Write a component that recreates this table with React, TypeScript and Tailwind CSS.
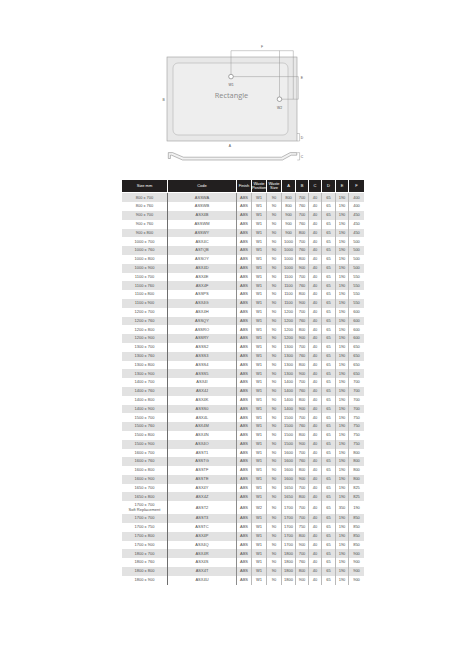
import React from "react";

type Row = {
  size: string;
  sub?: string;
  code: string;
  pos: string;
  a: string;
  b: string;
  e: string;
  f: string;
};

const F: Record<string, string> = {
  "800": "400",
  "900": "450",
  "1000": "500",
  "1100": "550",
  "1200": "600",
  "1300": "650",
  "1400": "700",
  "1500": "750",
  "1600": "800",
  "1650": "825",
  "1700": "850",
  "1800": "900",
};

const list: [string, string, string][] = [
  ["800", "700", "ASSWA"],
  ["800", "760", "ASSWB"],
  ["900", "700", "ASX4B"],
  ["900", "760", "ASSWM"],
  ["900", "800", "ASSWY"],
  ["1000", "700", "ASX4C"],
  ["1000", "760", "ASTQB"],
  ["1000", "800", "ASSOY"],
  ["1000", "900", "ASX4D"],
  ["1100", "700", "ASX4E"],
  ["1100", "760", "ASX4F"],
  ["1100", "800", "ASSPS"],
  ["1100", "900", "ASX4G"],
  ["1200", "700", "ASX4H"],
  ["1200", "760", "ASSQY"],
  ["1200", "800", "ASSRO"],
  ["1200", "900", "ASSRY"],
  ["1300", "700", "ASSS2"],
  ["1300", "760", "ASSS3"],
  ["1300", "800", "ASSS4"],
  ["1300", "900", "ASSS5"],
  ["1400", "700", "ASX4I"],
  ["1400", "760", "ASX4J"],
  ["1400", "800", "ASX4K"],
  ["1400", "900", "ASSS0"],
  ["1500", "700", "ASX4L"],
  ["1500", "760", "ASX4M"],
  ["1500", "800", "ASX4N"],
  ["1500", "900", "ASX4O"],
  ["1600", "700", "ASST1"],
  ["1600", "760", "ASSTG"],
  ["1600", "800", "ASSTF"],
  ["1600", "900", "ASSTE"],
  ["1650", "700", "ASX4Y"],
  ["1650", "800", "ASX4Z"],
  ["1700", "700", "ASST2"],
  ["1700", "700", "ASST3"],
  ["1700", "750", "ASSTC"],
  ["1700", "800", "ASX4P"],
  ["1700", "900", "ASX4Q"],
  ["1800", "700", "ASX4R"],
  ["1800", "760", "ASX4S"],
  ["1800", "800", "ASX4T"],
  ["1800", "900", "ASX4U"],
];

const rows: Row[] = list.map(([a, b, code], i) =>
  i === 35
    ? { size: `${a} x ${b}`, sub: "Soft Replacement", code, pos: "W2", a, b, e: "350", f: "190" }
    : { size: `${a} x ${b}`, code, pos: "W1", a, b, e: "190", f: F[a] }
);

const cols = "grid grid-cols-[45px_69px_15px_15px_15px_14px_13px_13px_14px_13px_16px]";

function Diagram() {
  const s = "#8f8f8f";
  return (
    <svg width="160" height="125" viewBox="150 40 160 125" className="block ml-[150px] mt-[40px]">
      {/* tray top view */}
      <rect x="167" y="57" width="130" height="84" fill="#e8e8e8" stroke="#9c9c9c" strokeWidth="0.6" />
      <rect x="173" y="63" width="115" height="72" rx="5" fill="#eeeeee" stroke="#b4b4b4" strokeWidth="0.6" />
      {/* waste positions */}
      <circle cx="231" cy="76.6" r="2.3" fill="#fff" stroke="#555" strokeWidth="0.5" />
      <circle cx="279.5" cy="99.2" r="2.3" fill="#fff" stroke="#555" strokeWidth="0.5" />
      {/* dimension lines */}
      <path
        d="M231 74.3 V50.7 H293.3 V99.2 H281.8 M279.5 50.7 V96.9 M233.3 76.6 H298.3 V99.2 H293.3"
        fill="none"
        stroke={s}
        strokeWidth="0.45"
      />
      <path d="M297 133.5 H299.6 V141 H297" fill="none" stroke={s} strokeWidth="0.45" />
      {/* side profile */}
      <path
        d="M168.3 158.5 V152.6 H172.6 L183.4 157.2 H281.6 L290.2 152.6 H296.8 V155.2 H291.2 L282.4 160 H182.6 L171.6 155.2 H170.4 V158.5 Z"
        fill="#f2f2f2"
        stroke="#7a7a7a"
        strokeWidth="0.5"
      />
      <path d="M297.2 152.6 H299.6 V160 H297.2" fill="none" stroke={s} strokeWidth="0.45" />
      <g fontFamily="'Liberation Sans', Arial, sans-serif" fill="#555" fontSize="3.4" textAnchor="middle">
        <text x="231" y="86">W1</text>
        <text x="279.5" y="108.6">W2</text>
        <text x="262" y="48">F</text>
        <text x="301.8" y="79">E</text>
        <text x="163.6" y="101.3">B</text>
        <text x="230" y="147.3">A</text>
        <text x="302" y="139">D</text>
        <text x="302" y="157.6">C</text>
      </g>
      <text
        x="231.5"
        y="98.3"
        textAnchor="middle"
        fontFamily="'Open Sans', 'Liberation Sans', sans-serif"
        fontSize="7.4"
        fill="#8a8a8a"
      >
        Rectangle
      </text>
    </svg>
  );
}

const headers = ["Size mm", "Code", "Finish", "Waste Position", "Waste Size", "A", "B", "C", "D", "E", "F"];

export default function App() {
  return (
    <div className="w-[474px] h-[670px] bg-white overflow-hidden font-['Liberation_Sans_Narrow','Liberation_Sans',Arial,sans-serif]">
      <Diagram />

      <div className="ml-[122px] mt-[15px] w-[242px]">
        {/* header */}
        <div className={`${cols} h-[12px] bg-[#221f1f] text-white text-[4px] leading-[4.4px]`}>
          {headers.map((h, i) => (
            <div
              key={h}
              className={`flex items-center justify-center text-center px-px ${i > 0 ? "border-l border-white" : ""}`}
            >
              {h}
            </div>
          ))}
        </div>

        {/* body */}
        <div className="mt-[1.4px]">
          {rows.map((r, i) => {
            const cells = [r.code, "ABS", r.pos, "90", r.a, r.b, "40", "65", r.e, r.f];
            return (
              <div
                key={i}
                className={`${cols} ${r.sub ? "h-[13px]" : "h-[8.8px]"} ${
                  i % 2 === 0 ? "bg-[#e2e2e2]" : "bg-white"
                } text-[4px] leading-[4.4px] text-[#4d4d4d]`}
              >
                <div className="flex flex-col items-center justify-center text-center">
                  <span>{r.size}</span>
                  {r.sub && <span>{r.sub}</span>}
                </div>
                {cells.map((c, j) => (
                  <div
                    key={j}
                    className={`flex items-center justify-center border-l ${
                      j === 0 ? "border-[#6e6e6e]" : j === 1 ? "border-[#8c8c8c]" : "border-[#b9b9b9]"
                    }`}
                  >
                    {c}
                  </div>
                ))}
              </div>
            );
          })}
        </div>
      </div>
    </div>
  );
}
